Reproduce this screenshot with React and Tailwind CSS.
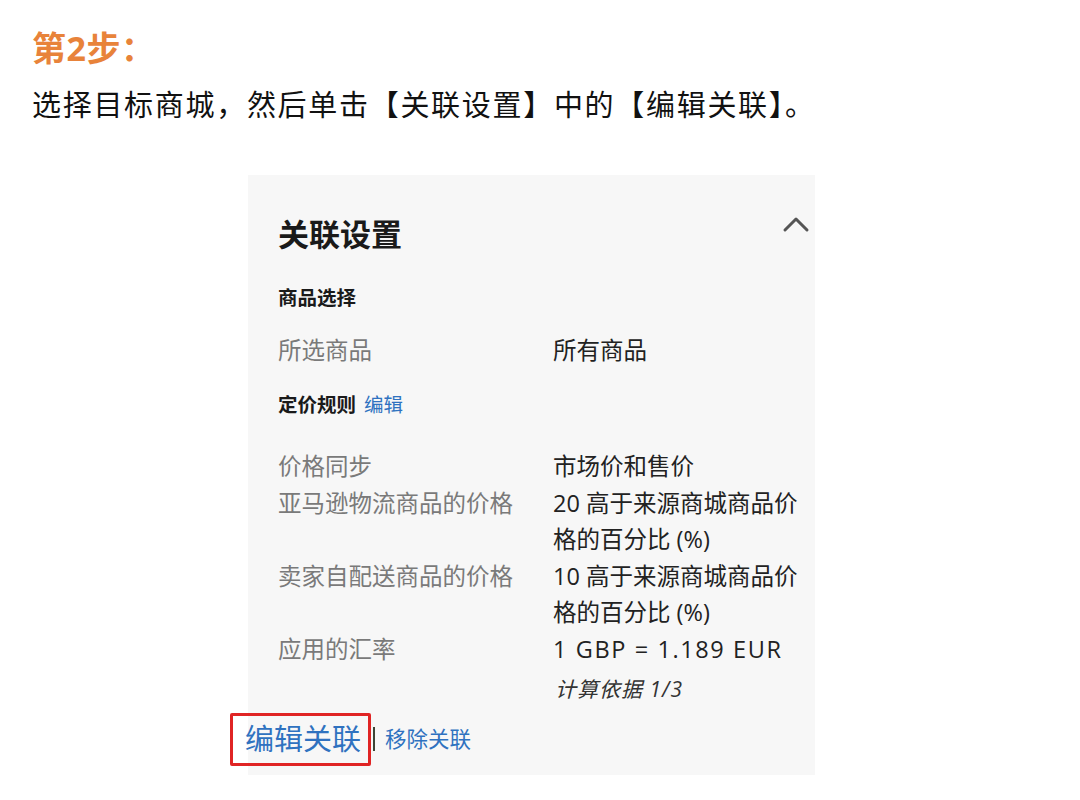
const FONT = "font-['Open_Sans','Microsoft_YaHei','Noto_Sans_CJK_SC',sans-serif]"

const rows = [
  { label: '价格同步', value: ['市场价和售价'] },
  { label: '亚马逊物流商品的价格', value: ['20 高于来源商城商品价', '格的百分比 (%)'] },
  { label: '卖家自配送商品的价格', value: ['10 高于来源商城商品价', '格的百分比 (%)'] },
  { label: '应用的汇率', value: ['1 GBP = 1.189 EUR'], wide: true },
]

function ChevronUp() {
  return (
    <svg width="28" height="18" viewBox="0 0 28 18" className="mt-[1px]">
      <path d="M3 15 L14 4 L25 15" fill="none" stroke="#555" strokeWidth="3" strokeLinecap="round" strokeLinejoin="round" />
    </svg>
  )
}

export default function App() {
  return (
    <div className={`w-[1080px] h-[800px] bg-white px-[32px] ${FONT}`}>
      <h2 className="pt-[28px] text-[34px] leading-[40px] font-bold tracking-[0.5px] text-[#e8833a]">第2步：</h2>
      <p className="mt-[17px] text-[29px] leading-[40px] tracking-[1.7px] text-[#111]">
        选择目标商城，然后单击【关联设置】中的【编辑关联】。
      </p>

      <div className="mt-[50px] ml-[216px] w-[567px] h-[600px] bg-[#f7f7f7] pl-[30px] pr-[5px]">
        <div className="pt-[39px] flex items-start justify-between">
          <h3 className="text-[31px] leading-[40px] font-bold text-[#1a1a1a]">关联设置</h3>
          <ChevronUp />
        </div>

        <div className="mt-[30px] text-[19.5px] leading-[28px] font-bold text-[#1a1a1a]">商品选择</div>

        <div className="mt-[20px] flex text-[23.5px] leading-[36px]">
          <div className="w-[275px] text-[#7a7a7a]">所选商品</div>
          <div className="text-[#222]">所有商品</div>
        </div>

        <div className="mt-[23px] flex gap-[8px] text-[19.5px] leading-[28px]">
          <span className="font-bold text-[#1a1a1a]">定价规则</span>
          <span className="text-[#2f72c0]">编辑</span>
        </div>

        <div className="mt-[29px] text-[23.5px] leading-[36.6px]">
          {rows.map((r) => (
            <div key={r.label} className="flex">
              <div className="w-[275px] shrink-0 text-[#7a7a7a]">{r.label}</div>
              <div className={`text-[#222] whitespace-nowrap ${r.wide ? 'tracking-[1.6px]' : ''}`}>
                {r.value.map((v) => (
                  <div key={v}>{v}</div>
                ))}
              </div>
            </div>
          ))}
        </div>

        <div className="mt-[6px] ml-[277px] text-[21px] leading-[30px] tracking-[1px] italic text-[#333]">计算依据 1/3</div>

        <div className="mt-[9px] -ml-[48px] flex items-center">
          <span className="inline-flex items-center h-[53px] border-[3px] border-[#e02424] rounded-[2px] pl-[12px] pr-[7px] text-[29px] leading-[40px] text-[#2f72c0]">
            编辑关联
          </span>
          <span className="ml-[2px] w-[2px] h-[24px] bg-[#3f4535]" />
          <span className="ml-[10px] text-[21.5px] leading-[30px] text-[#2f72c0]">移除关联</span>
        </div>
      </div>
    </div>
  )
}
